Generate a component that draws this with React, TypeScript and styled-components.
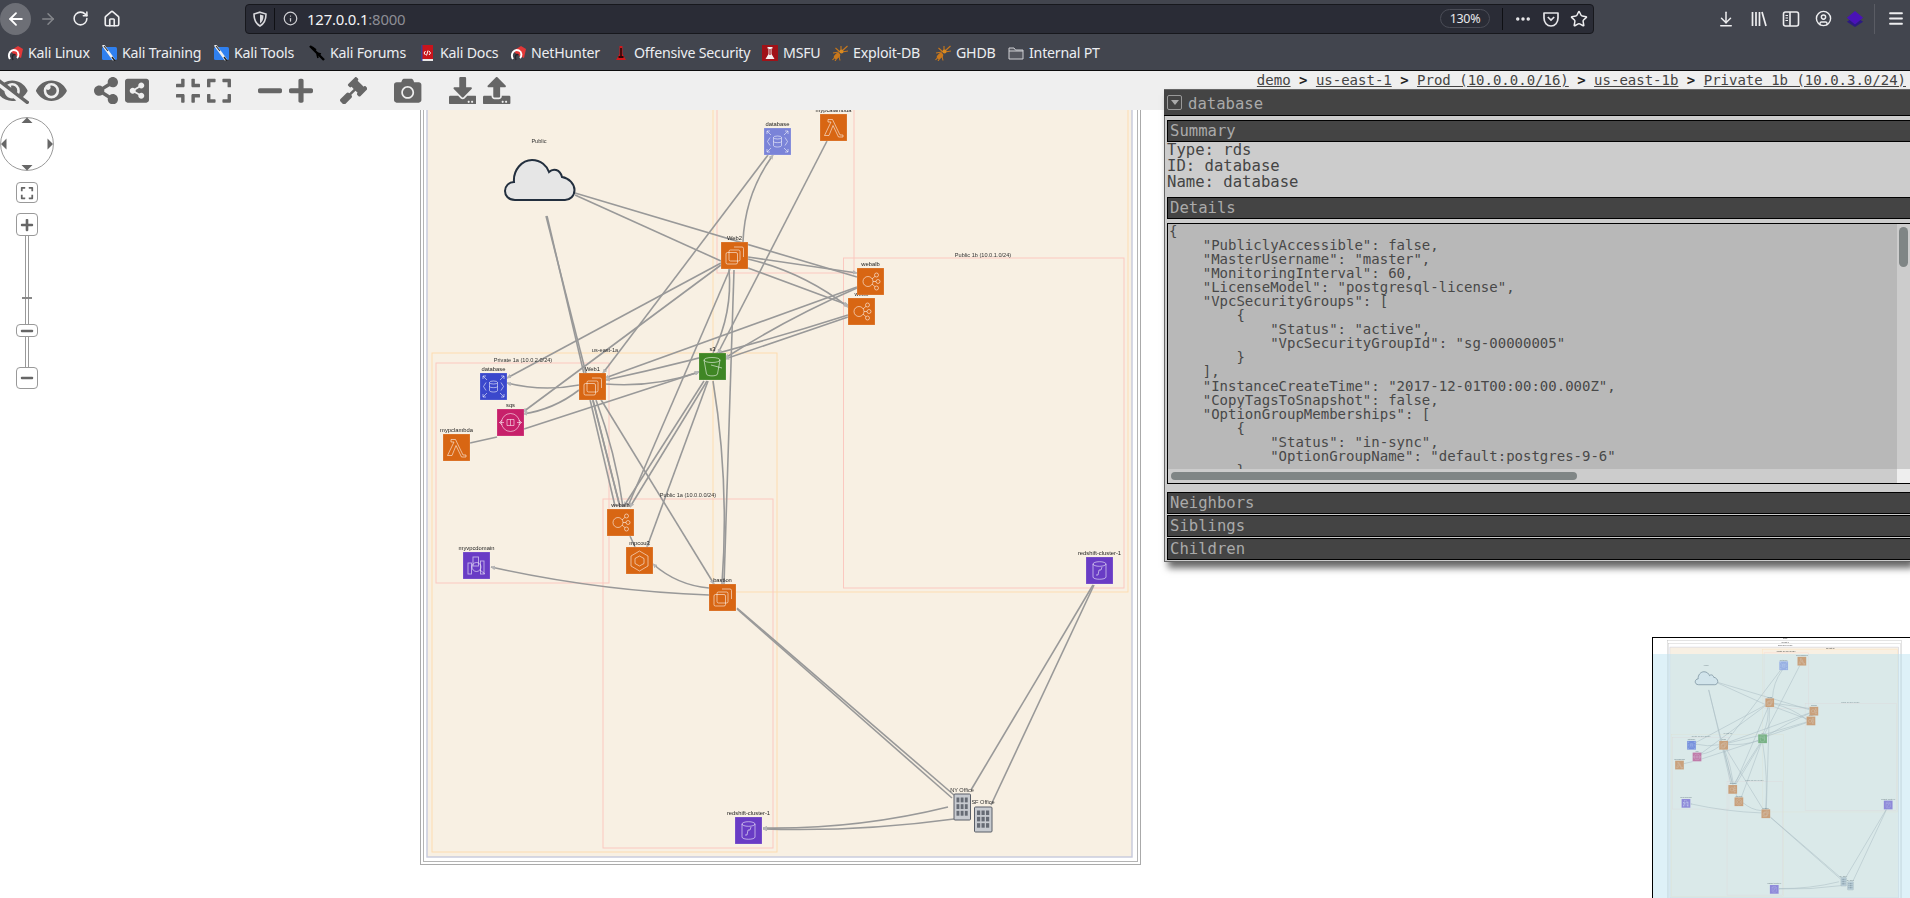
import React from "react";
import styled, { createGlobalStyle } from "styled-components";
import { ArrowLeft, ArrowRight, RotateCw, House, Info, Star, ArrowDownToLine, CircleUser, Menu, Ellipsis } from "lucide-react";
import {
  FaEyeSlash, FaEye, FaShareAlt, FaShareAltSquare, FaCompress, FaExpand,
  FaMinus, FaPlus, FaGavel, FaCamera, FaDownload, FaUpload,
} from "react-icons/fa";

const Global = createGlobalStyle`
  html, body { margin: 0; padding: 0; background: #fff; overflow: hidden; }
  * { box-sizing: border-box; }
`;

const Page = styled.div`
  position: relative;
  width: 1910px;
  height: 898px;
  overflow: hidden;
  display: flex;
  flex-direction: column;
  background: #fff;
`;

/* ---------- browser chrome ---------- */
const NavRow = styled.div`
  height: 37px;
  background: #42454e;
  display: flex;
  align-items: center;
  color: #f0f0f2;
`;
const BackCircle = styled.div`
  width: 31px;
  height: 32px;
  border-radius: 50%;
  background: #6d6f76;
  display: flex;
  align-items: center;
  justify-content: center;
  color: #fff;
`;
const NavIcon = styled.div<{ $ml: number; $dim?: boolean }>`
  width: 18px;
  height: 18px;
  margin-left: ${(p) => p.$ml}px;
  display: flex;
  align-items: center;
  justify-content: center;
  flex: none;
  color: ${(p) => (p.$dim ? "#85878c" : "#eeeef0")};
`;
const UrlBar = styled.div`
  width: 1349px;
  height: 30px;
  margin-left: 124px;
  background: #2a2c36;
  border: 1px solid #17181d;
  border-radius: 4px;
  display: flex;
  align-items: center;
  padding: 0 5px 0 6px;
  flex: none;
`;
const UrlSep = styled.div<{ $ml: number }>`
  width: 1px;
  height: 22px;
  background: #0f1014;
  margin-left: ${(p) => p.$ml}px;
  flex: none;
`;
const UrlText = styled.div`
  margin-left: 8px;
  font: 14.9px "Noto Sans", sans-serif;
  color: #f4f4f6;
  flex: 1;
  letter-spacing: -0.2px;
`;
const UrlPort = styled.span`
  color: #8d8e95;
`;
const ZoomPill = styled.div`
  width: 50px;
  height: 19px;
  border: 1px solid #4a4c56;
  border-radius: 10px;
  font: 12.5px/17px "Noto Sans", sans-serif;
  color: #e8e8ea;
  text-align: center;
  letter-spacing: -0.3px;
`;
const ChromeRule = styled.div`
  width: 1px;
  height: 30px;
  margin-left: 10px;
  background: #5a5c64;
  flex: none;
`;
const BookmarkRow = styled.div`
  height: 34px;
  background: #42454e;
  border-bottom: 1px solid #0c0c0d;
  display: flex;
  align-items: center;
  padding-left: 7px;
  padding-bottom: 2px;
`;
const Bookmark = styled.div<{ $w: number }>`
  width: ${(p) => p.$w}px;
  flex: none;
  display: flex;
  align-items: center;
  gap: 5px;
  font: 14.2px "Noto Sans", sans-serif;
  letter-spacing: -0.22px;
  color: #eceef2;
  white-space: nowrap;
`;

const BmSvg: React.FC<{ children: React.ReactNode }> = ({ children }) => (
  <svg width="16" height="16" viewBox="0 0 16 16" style={{ flex: "none" }}>{children}</svg>
);
const KaliIcon = () => (
  <BmSvg>
    <path d="M3 6 L11 1 L16 4 L14 13 L8 10 Z" fill="#e23838" />
    <path d="M3 14 C0 9 4 3.5 9 5.5 C12 7 12 11 10 13" fill="none" stroke="#fff" strokeWidth="1.9" />
    <path d="M6 15 C4 11 6.5 8.5 8.5 10" fill="none" stroke="#26262c" strokeWidth="1.5" />
  </BmSvg>
);
const ToolIcon = () => (
  <BmSvg>
    <rect x="1" y="2" width="15" height="13" rx="1.5" fill="#2f80f0" />
    <path d="M2 0 L13 15" stroke="#f0f0f0" strokeWidth="2.6" />
    <path d="M3 1 L7 6" stroke="#333" strokeWidth="1.2" />
    <path d="M11 12 L14 16" stroke="#222" strokeWidth="1.4" />
  </BmSvg>
);
const ForumIcon = () => (
  <BmSvg>
    <path d="M1 1 L15 15" stroke="#000" strokeWidth="2.4" />
    <path d="M3 2 L7 5 M8 8 L12 9 M8 9 L9 13" stroke="#000" strokeWidth="1.6" />
  </BmSvg>
);
const DocsIcon = () => (
  <BmSvg>
    <rect x="2" y="0" width="12" height="15" fill="#c8141c" />
    <rect x="2" y="14" width="12" height="2" fill="#e8e8e8" />
    <rect x="2" y="0" width="1.5" height="16" fill="#3a3f8f" />
    <path d="M6.5 6 L5 8 L6.5 10 M10 6 L11.5 8 L10 10 M9 5.5 L7.5 10.5" fill="none" stroke="#fff" strokeWidth="1" />
  </BmSvg>
);
const FlaskIcon = () => (
  <BmSvg>
    <path d="M6.5 1 H9.5 V9 L13 15 H3 L6.5 9 Z" fill="#d0181c" />
    <path d="M8 3 V12" stroke="#2a0808" strokeWidth="1.6" />
    <rect x="5.5" y="11" width="5" height="2" fill="#2a0808" />
  </BmSvg>
);
const MsfuIcon = () => (
  <BmSvg>
    <rect width="16" height="16" fill="#a01218" />
    <path d="M5.5 2 H10.5 V3.5 H9.5 V9 L12.5 14 H3.5 L6.5 9 V3.5 H5.5 Z" fill="#f4f0f0" />
    <rect x="7.4" y="4" width="1.2" height="6" fill="#a01218" />
  </BmSvg>
);
const AntIcon = () => (
  <BmSvg>
    <path d="M0.5 15 L6 9 M3 16 L7 10 M1 8 L7 7 M3.5 3 L8 7 M9 1 L9 6 M15.5 1 L10 6 M16 6 L10 7 M7 11 L8 15.5" stroke="#c9781c" strokeWidth="1.1" fill="none" />
    <ellipse cx="5" cy="11" rx="3.6" ry="2.4" transform="rotate(-40 5 11)" fill="#c9781c" />
    <circle cx="9.5" cy="6.5" r="2" fill="#d98a20" />
  </BmSvg>
);
const FolderIcon = () => (
  <BmSvg>
    <path d="M1 3 H6 L7.5 5 H15 V14 H1 Z" fill="#55575f" stroke="#cfd0d4" strokeWidth="1" />
    <path d="M1 6 H15" stroke="#cfd0d4" strokeWidth="1" />
  </BmSvg>
);

const bookmarks: [string, React.ReactNode, number][] = [
  ["Kali Linux", <KaliIcon />, 94],
  ["Kali Training", <ToolIcon />, 112],
  ["Kali Tools", <ToolIcon />, 96],
  ["Kali Forums", <ForumIcon />, 110],
  ["Kali Docs", <DocsIcon />, 91],
  ["NetHunter", <KaliIcon />, 103],
  ["Offensive Security", <FlaskIcon />, 149],
  ["MSFU", <MsfuIcon />, 70],
  ["Exploit-DB", <AntIcon />, 103],
  ["GHDB", <AntIcon />, 73],
  ["Internal PT", <FolderIcon />, 100],
];

/* ---------- page toolbar ---------- */
const ToolBar = styled.div`
  height: 39px;
  background: #efefef;
  display: flex;
  align-items: center;
  position: relative;
  z-index: 2;
  color: #666;
  flex: none;
`;
const ToolIcons = styled.div`
  display: flex;
  align-items: center;
  gap: 27px;
  margin-left: -5px;
  height: 39px;
`;
const ToolGroup = styled.div`
  display: flex;
  align-items: center;
  gap: 7px;
`;
const ToolGlyph = styled.span<{ $w: number }>`
  display: flex;
  flex: none;
  width: ${(p) => p.$w}px;
  height: 27.4px;
  svg {
    width: ${(p) => p.$w}px;
    height: 27.4px;
  }
`;
const Crumbs = styled.div`
  margin-left: auto;
  align-self: flex-start;
  padding-right: 4px;
  font: 14px/18px "DejaVu Sans Mono", monospace;
  color: #333;
  white-space: pre;
`;
const CrumbLink = styled.span`
  text-decoration: underline;
  color: #444;
`;
const CrumbSep = styled.b`
  color: #222;
`;

/* ---------- canvas ---------- */
const Canvas = styled.div`
  position: relative;
  flex: 1;
  background: #fff;
`;
const GraphSvg = styled.svg`
  display: block;
  width: 1910px;
  height: 788px;
  filter: blur(0.4px);
`;

/* pan/zoom overlay */
const PanZoom = styled.div`
  position: absolute;
  left: 0;
  top: 7px;
  width: 54px;
  display: flex;
  flex-direction: column;
  align-items: center;
`;
const ZoomBtn = styled.div<{ $h: number; $mt?: number }>`
  width: 22px;
  height: ${(p) => p.$h}px;
  margin-top: ${(p) => p.$mt ?? 0}px;
  background: #fff;
  border: 1px solid #999;
  border-radius: 4px;
  color: #666;
  display: flex;
  align-items: center;
  justify-content: center;
  flex: none;
`;
const Rail = styled.div<{ $h: number }>`
  position: relative;
  width: 4px;
  height: ${(p) => p.$h}px;
  border-left: 1px solid #999;
  border-right: 1px solid #999;
  flex: none;
`;
const RailTick = styled.div`
  position: absolute;
  left: -4px;
  top: 61px;
  width: 10px;
  height: 2px;
  background: #888;
`;

/* inspector */
const Inspector = styled.div`
  position: absolute;
  z-index: 3;
  left: 1164px;
  top: 89px;
  width: 746px;
  height: 473px;
  background: #ccc;
  border: 1px solid #666;
  border-right: none;
  padding: 0 0 0 2px;
  box-shadow: 4px 6px 7px rgba(0, 0, 0, 0.6);
  font-family: "DejaVu Sans Mono", monospace;
  display: flex;
  flex-direction: column;
`;
const WindowHead = styled.div`
  height: 26px;
  margin-left: -3px;
  flex: none;
  background: #444;
  border-bottom: 1px solid #000;
  display: flex;
  align-items: center;
  padding-left: 3px;
  gap: 6px;
  color: #aaa;
  font-size: 15.6px;
`;
const WindowTitle = styled.span`
  position: relative;
  top: 1px;
`;
const Collapse = styled.div`
  width: 15px;
  height: 15px;
  border: 1.5px solid #999;
  border-radius: 2px;
  position: relative;
  display: flex;
  align-items: center;
  justify-content: center;
  &::after {
    content: "";
    border-left: 4px solid transparent;
    border-right: 4px solid transparent;
    border-top: 5px solid #aaa;
  }
`;
const SectionHead = styled.div<{ $mt?: number }>`
  height: 22px;
  margin-top: ${(p) => p.$mt ?? 0}px;
  flex: none;
  background: #444;
  border: 1px solid #000;
  border-right: none;
  color: #aaa;
  font-size: 15.6px;
  line-height: 21px;
  padding-left: 2px;
`;
const SummaryBody = styled.div`
  height: 55px;
  flex: none;
  color: #444;
  font-size: 15.6px;
  line-height: 15.8px;
  white-space: pre;
  padding-top: 1px;
  margin-left: -2px;
  padding-left: 2px;
`;
const CodeBox = styled.div`
  position: relative;
  margin-top: 4px;
  height: 261px;
  flex: none;
  background: #b8b8b8;
  border: 1px solid #000;
  border-right: none;
  overflow: hidden;
`;
const Code = styled.pre`
  margin: 0;
  padding: 0 0 0 1px;
  font: 14px/14.05px "DejaVu Sans Mono", monospace;
  color: #484848;
`;
const VRail = styled.div`
  position: absolute;
  right: 0;
  top: 0;
  bottom: 14px;
  width: 13px;
  background: #ccc;
`;
const VThumb = styled.div`
  position: absolute;
  left: 2px;
  top: 3px;
  width: 9px;
  height: 40px;
  border-radius: 5px;
  background: #7f8585;
`;
const HRail = styled.div`
  position: absolute;
  left: 0;
  right: 13px;
  bottom: 0;
  height: 14px;
  background: #ccc;
`;
const HThumb = styled.div`
  position: absolute;
  left: 3px;
  top: 3px;
  width: 406px;
  height: 8px;
  border-radius: 4px;
  background: #7f8585;
`;
const Corner = styled.div`
  position: absolute;
  right: 0;
  bottom: 0;
  width: 13px;
  height: 14px;
  background: #eee;
`;

/* minimap */
const MiniMap = styled.div`
  position: absolute;
  z-index: 2;
  left: 1652px;
  top: 637px;
  width: 258px;
  height: 261px;
  background: #fff;
  border-left: 1.5px solid #000;
  border-top: 1.5px solid #000;
  overflow: hidden;
`;
const MiniSvg = styled.svg`
  display: block;
  width: 258px;
  height: 261px;
  filter: blur(0.5px);
`;
const MiniView = styled.div`
  position: absolute;
  left: 0;
  right: 0;
  top: 15.5px;
  bottom: 0;
  background: rgba(184, 225, 240, 0.47);
`;

/* ---------- diagram data ---------- */
type Kind = "ec2" | "elb" | "lambda" | "rds" | "s3" | "sqs" | "ecs" | "redshift" | "es";
const nodes: { k: Kind; x: number; y: number; c: string; label: string }[] = [
  { k: "rds", x: 764, y: 128, c: "#7a83d8", label: "database" },
  { k: "lambda", x: 820, y: 114, c: "#d86613", label: "mypcalambda" },
  { k: "ec2", x: 721, y: 242, c: "#d86613", label: "Web2" },
  { k: "elb", x: 848, y: 298, c: "#d86613", label: "webb" },
  { k: "elb", x: 857, y: 268, c: "#d86613", label: "webalb" },
  { k: "s3", x: 699, y: 353, c: "#3f8624", label: "s3" },
  { k: "ec2", x: 579, y: 373, c: "#d86613", label: "Web1" },
  { k: "rds", x: 480, y: 373, c: "#3b48cc", label: "database" },
  { k: "sqs", x: 497, y: 409, c: "#c7206a", label: "sqs" },
  { k: "lambda", x: 443, y: 434, c: "#d86613", label: "mypclambda" },
  { k: "elb", x: 607, y: 509, c: "#d86613", label: "webalb" },
  { k: "ecs", x: 626, y: 547, c: "#d86613", label: "mpcou3" },
  { k: "ec2", x: 709, y: 584, c: "#d86613", label: "bastion" },
  { k: "es", x: 463, y: 552, c: "#693cc5", label: "myvpcdomain" },
  { k: "redshift", x: 735, y: 817, c: "#693cc5", label: "redshift-cluster-1" },
  { k: "redshift", x: 1086, y: 557, c: "#693cc5", label: "redshift-cluster-1" },
];

/* x1 y1 x2 y2 bend arrow */
const edges: [number, number, number, number, number, boolean][] = [
  [575, 193, 857, 277, 0, false],
  [575, 195, 721, 261, 0, false],
  [547, 216, 615, 506, 0, false],
  [546, 216, 620, 507, 0, false],
  [593, 400, 620, 507, 0, false],
  [596, 400, 623, 507, -3, false],
  [600, 398, 714, 584, 0, true],
  [579, 385, 507, 383, -4, true],
  [579, 390, 523, 414, -4, true],
  [605, 384, 699, 372, 5, true],
  [848, 315, 606, 380, -3, true],
  [857, 287, 605, 378, 0, true],
  [848, 317, 725, 359, 0, true],
  [857, 288, 725, 358, 3, true],
  [721, 263, 507, 378, 0, true],
  [721, 265, 523, 412, 0, true],
  [768, 155, 603, 373, 0, true],
  [743, 242, 773, 155, -7, true],
  [827, 141, 718, 353, 0, true],
  [748, 257, 857, 273, 0, true],
  [748, 259, 848, 307, -6, true],
  [748, 268, 848, 305, 0, true],
  [729, 269, 713, 353, -6, false],
  [730, 269, 628, 506, 0, false],
  [734, 270, 724, 584, 0, true],
  [713, 381, 722, 584, -6, true],
  [707, 381, 630, 507, 0, true],
  [704, 381, 624, 506, 0, true],
  [708, 381, 647, 547, 0, true],
  [630, 536, 635, 547, 0, false],
  [524, 429, 699, 372, 0, true],
  [470, 443, 497, 437, 0, false],
  [709, 595, 491, 567, -5, true],
  [709, 588, 653, 564, -5, true],
  [737, 608, 954, 795, 0, false],
  [737, 609, 952, 798, 0, false],
  [1093, 585, 971, 790, 0, false],
  [1094, 585, 991, 805, 0, false],
  [948, 807, 763, 828, -6, true],
  [954, 819, 763, 829, -4, true],
];

const regions: { x: number; y: number; w: number; h: number; c: string }[] = [
  { x: 713, y: 92, w: 415, h: 500, c: "#fdddb2" },
  { x: 432, y: 353, w: 345, h: 499, c: "#fddcb0" },
  { x: 717, y: 102, w: 137, h: 171, c: "#fbc8c0" },
  { x: 436, y: 363, w: 173, h: 220, c: "#fbc8c0" },
  { x: 603, y: 499, w: 170, h: 349, c: "#fbc8c0" },
  { x: 843.5, y: 258, w: 280.5, h: 330, c: "#fbc8c0" },
];

const texts: [string, number, number][] = [
  ["demo", 782, 60],
  ["us-east-1", 782, 72],
  ["Prod (10.0.0.0/16)", 782, 80],
  ["us-east-1b", 921, 91],
  ["Private 1b (10.0.3.0/24)", 785, 99],
  ["Public", 539, 142.5],
  ["us-east-1a", 605, 352],
  ["Private 1a (10.0.2.0/24)", 523, 362],
  ["Public 1a (10.0.0.0/24)", 688, 497],
  ["Public 1b (10.0.1.0/24)", 983, 257],
  ["NY Office", 962, 792],
  ["SF Office", 983, 804],
];

const Glyph: React.FC<{ k: Kind }> = ({ k }) => {
  switch (k) {
    case "ec2":
      return (
        <g>
          <rect x="5" y="10.5" width="11.5" height="11.5" rx="1.5" />
          <rect x="8" y="8" width="11" height="11" rx="1.5" />
          <path d="M13 5 H21 A1.5 1.5 0 0 1 22.5 6.5 V15" />
        </g>
      );
    case "elb":
      return (
        <g>
          <circle cx="11" cy="13.5" r="5" />
          <circle cx="19.5" cy="7" r="2" />
          <circle cx="21" cy="13.5" r="2" />
          <circle cx="19.5" cy="20" r="2" />
          <path d="M15 11 L18 8.3 M16 13.5 H19 M15 16 L18 18.7" />
        </g>
      );
    case "lambda":
      return <path d="M8 5.5 H12.5 L20 21 H23 V23 H18.5 L13 11.5 L9 21.5 H4.5 L11 8 H8 Z" />;
    case "rds":
      return (
        <g>
          <ellipse cx="13.5" cy="9.5" rx="4" ry="1.5" />
          <path d="M9.5 9.5 V17.5 C9.5 19.5 17.5 19.5 17.5 17.5 V9.5 M9.5 13.5 C9.5 15 17.5 15 17.5 13.5" />
          <path d="M6 9.5 L3.5 13.5 L6 17.5 M21 9.5 L23.5 13.5 L21 17.5" />
          <path d="M3 3 L7 7 M3 6 V3 H6 M24 3 L20 7 M24 6 V3 H21 M3 24 L7 20 M3 21 V24 H6 M24 24 L20 20 M24 21 V24 H21" />
        </g>
      );
    case "s3":
      return (
        <g>
          <ellipse cx="13" cy="7" rx="8" ry="2.5" />
          <path d="M5 7 L7.5 21 C8 23.5 18 23.5 18.5 21 L21 7" />
          <path d="M12 12 L23 15" />
        </g>
      );
    case "sqs":
      return (
        <g>
          <circle cx="13.5" cy="13.5" r="9" />
          <path d="M10 10.5 H17 V16.5 H10 Z M13.5 10.5 V16.5" />
          <path d="M2.5 13.5 H7 M20 13.5 H24.5 M5 11 L2.5 13.5 L5 16 M22 11 L24.5 13.5 L22 16" />
        </g>
      );
    case "ecs":
      return (
        <g>
          <path d="M13.5 4 L22 9 V19 L13.5 24 L5 19 V9 Z" />
          <path d="M13.5 9 L18 11.5 V16.5 L13.5 19 L9 16.5 V11.5 Z" />
        </g>
      );
    case "redshift":
      return (
        <g>
          <ellipse cx="13.5" cy="7" rx="6.5" ry="2.3" />
          <path d="M7 7 V20 C7 23 20 23 20 20 V7" />
          <path d="M10 18 L12 18 L13 13 L15 13 L16 10" />
        </g>
      );
    case "es":
      return (
        <g>
          <rect x="5" y="11" width="3.5" height="11" />
          <rect x="17.5" y="9" width="3.5" height="13" />
          <rect x="10" y="5" width="5.5" height="9" />
          <circle cx="13.5" cy="15" r="4.5" />
          <path d="M17 18 L22 22" />
        </g>
      );
  }
};

const Office: React.FC<{ x: number; y: number; w: number; h: number }> = ({ x, y, w, h }) => {
  const cells: React.ReactNode[] = [];
  const cw = (w - 4) / 3;
  const ch = (h - 6) / 3;
  for (let r = 0; r < 3; r++)
    for (let c = 0; c < 3; c++)
      cells.push(
        <rect key={`${r}${c}`} x={x + 2.5 + c * cw} y={y + 3.5 + r * ch} width={cw - 1.3} height={ch - 1.8} fill="#666b74" />
      );
  return (
    <g>
      <rect x={x} y={y} width={w} height={h} rx="1" fill="#c8cbd0" stroke="#5a5f68" strokeWidth="1" />
      {cells}
    </g>
  );
};

const arrowPath = (x1: number, y1: number, x2: number, y2: number, bend: number) => {
  if (!bend) return `M${x1} ${y1} L${x2} ${y2}`;
  const mx = (x1 + x2) / 2;
  const my = (y1 + y2) / 2;
  const dx = x2 - x1;
  const dy = y2 - y1;
  const len = Math.hypot(dx, dy);
  const cx = mx + (-dy / len) * bend * 2;
  const cy = my + (dx / len) * bend * 2;
  return `M${x1} ${y1} Q${cx} ${cy} ${x2} ${y2}`;
};

const Graph: React.FC<{ id: string }> = ({ id }) => (
  <g>
    <defs>
      <marker id={`${id}-a`} viewBox="0 0 10 10" refX="9" refY="5" markerWidth="4.6" markerHeight="4.6" markerUnits="userSpaceOnUse" orient="auto">
        <path d="M0 0 L10 5 L0 10 Z" fill="#b5b5b5" />
      </marker>
    </defs>
    <rect x="420.5" y="64" width="720" height="800.5" fill="#fff" stroke="#aaa" strokeWidth="1" />
    <rect x="423.5" y="74" width="714" height="787.5" fill="#fff" stroke="#b4b4b4" strokeWidth="1" />
    <rect x="427" y="84" width="705" height="773" fill="#f8f0e3" stroke="#c6c9dc" strokeWidth="1.4" />
    {regions.map((r, i) => (
      <rect key={i} x={r.x} y={r.y} width={r.w} height={r.h} fill="none" stroke={r.c} strokeWidth="1" />
    ))}
    {edges.map(([a, b, c, d, bend, arrow], i) => (
      <path
        key={i}
        d={arrowPath(a, b, c, d, bend)}
        fill="none"
        stroke="#999"
        strokeWidth="1.6"
        markerEnd={arrow ? `url(#${id}-a)` : undefined}
      />
    ))}
    <path
      d="M515 200 C508 200 505 195 505 191 C505 186 509 182 514 182 C513 170 522 160 532 160 C541 160 547 166 549 172 C553 168 560 169 562 177 C569 178 574.5 184 574.5 190 C574.5 196 570 200 565 200 Z"
      fill="#e6e6e6"
      stroke="#232f3e"
      strokeWidth="2"
    />
    {nodes.map((n, i) => (
      <g key={i}>
        <rect x={n.x} y={n.y} width="27" height="27" fill={n.c} stroke="#fff" strokeOpacity="0.3" strokeWidth="0.6" />
        <g transform={`translate(${n.x} ${n.y})`} fill="none" stroke="#fff" strokeOpacity="0.62" strokeWidth="0.9">
          <Glyph k={n.k} />
        </g>
        <text x={n.x + 13.5} y={n.y - 2.5} textAnchor="middle" fontFamily="'Liberation Sans', sans-serif" fontSize="5.8" fill="#222">
          {n.label}
        </text>
      </g>
    ))}
    <Office x={954} y={794} w={16.5} h={26} />
    <Office x={974.5} y={807} w={17.5} h={25} />
    {texts.map(([t, x, y], i) => (
      <text key={i} x={x} y={y} textAnchor="middle" fontFamily="'Liberation Sans', sans-serif" fontSize="5.6" fill="#333">
        {t}
      </text>
    ))}
  </g>
);

const code = `{
    "PubliclyAccessible": false,
    "MasterUsername": "master",
    "MonitoringInterval": 60,
    "LicenseModel": "postgresql-license",
    "VpcSecurityGroups": [
        {
            "Status": "active",
            "VpcSecurityGroupId": "sg-00000005"
        }
    ],
    "InstanceCreateTime": "2017-12-01T00:00:00.000Z",
    "CopyTagsToSnapshot": false,
    "OptionGroupMemberships": [
        {
            "Status": "in-sync",
            "OptionGroupName": "default:postgres-9-6"
        }
    ],
    "Engine": "postgres"
}`;

const ShieldIcon = () => (
  <svg width="16" height="16" viewBox="0 0 16 16" style={{ flex: "none" }}>
    <path d="M8 1.2 L14 3 C14 9 12.5 12.5 8 15 C3.5 12.5 2 9 2 3 Z" fill="none" stroke="#d8d8dc" strokeWidth="1.6" />
    <path d="M8 3.5 L11.5 4.6 C11.5 8.5 10.5 10.8 8 12.5 Z" fill="#d8d8dc" />
  </svg>
);
const PocketIcon = () => (
  <svg width="18" height="18" viewBox="0 0 18 18">
    <path d="M2 3 H16 V8 C16 12.5 13 16 9 16 C5 16 2 12.5 2 8 Z" fill="none" stroke="#e4e4e8" strokeWidth="1.7" strokeLinejoin="round" />
    <path d="M5.8 7 L9 10 L12.2 7" fill="none" stroke="#e4e4e8" strokeWidth="1.7" />
  </svg>
);
const LibraryIcon = () => (
  <svg width="18" height="18" viewBox="0 0 18 18">
    <path d="M2.5 2 V16 M6 2 V16 M9.5 2 V16 M12 2 L16 16" fill="none" stroke="#eeeef0" strokeWidth="1.7" />
  </svg>
);
const SidebarIcon = () => (
  <svg width="18" height="18" viewBox="0 0 18 18">
    <rect x="1.5" y="2" width="15" height="14" rx="2" fill="none" stroke="#eeeef0" strokeWidth="1.6" />
    <path d="M8 2 V16" stroke="#eeeef0" strokeWidth="1.6" />
    <path d="M3.5 5.5 H6 M3.5 8 H6 M3.5 10.5 H6" stroke="#eeeef0" strokeWidth="1.2" />
  </svg>
);
const StackIcon = () => (
  <svg width="20" height="20" viewBox="0 0 20 20">
    <path d="M10 7 L19 13 L10 19 L1 13 Z" fill="#2c1a80" />
    <path d="M10 1 L19 8.5 L10 16 L1 8.5 Z" fill="#4a12b8" />
  </svg>
);

const PanControl = () => (
  <svg width="54" height="55" viewBox="0 0 54 55" style={{ flex: "none" }}>
    <circle cx="27" cy="27" r="26.4" fill="#fff" stroke="#999" strokeWidth="1" />
    <path d="M21.5 6 L27 0.5 L32.5 6 Z M21.5 48 L27 53.5 L32.5 48 Z M6.5 21.5 L1 27 L6.5 32.5 Z M47.5 21.5 L53 27 L47.5 32.5 Z" fill="#666" />
  </svg>
);

const App: React.FC = () => (
  <Page>
    <Global />
    <NavRow>
      <BackCircle>
        <ArrowLeft size={20} strokeWidth={2.2} />
      </BackCircle>
      <NavIcon $ml={8} $dim><ArrowRight size={18} /></NavIcon>
      <NavIcon $ml={14}><RotateCw size={17} strokeWidth={2.2} /></NavIcon>
      <NavIcon $ml={14}><House size={18} strokeWidth={2.2} /></NavIcon>
      <UrlBar>
        <ShieldIcon />
        <UrlSep $ml={6} />
        <NavIcon $ml={6} style={{ color: "#cfcfd3" }}><Info size={15} /></NavIcon>
        <UrlText>
          127.0.0.1<UrlPort>:8000</UrlPort>
        </UrlText>
        <ZoomPill>130%</ZoomPill>
        <UrlSep $ml={12} />
        <NavIcon $ml={11}><Ellipsis size={18} strokeWidth={2.6} /></NavIcon>
        <NavIcon $ml={10}><PocketIcon /></NavIcon>
        <NavIcon $ml={10}><Star size={18} strokeWidth={2} /></NavIcon>
      </UrlBar>
      <NavIcon $ml={123}><ArrowDownToLine size={18} /></NavIcon>
      <NavIcon $ml={15}><LibraryIcon /></NavIcon>
      <NavIcon $ml={14}><SidebarIcon /></NavIcon>
      <NavIcon $ml={14}><CircleUser size={17} /></NavIcon>
      <NavIcon $ml={14}><StackIcon /></NavIcon>
      <ChromeRule />
      <NavIcon $ml={12}><Menu size={19} strokeWidth={2.4} /></NavIcon>
    </NavRow>
    <BookmarkRow>
      {bookmarks.map(([label, icon, w]) => (
        <Bookmark key={label} $w={w}>
          {icon}
          {label}
        </Bookmark>
      ))}
    </BookmarkRow>
    <ToolBar>
      <ToolIcons>
        <ToolGroup>
          <ToolGlyph $w={34.25}><FaEyeSlash /></ToolGlyph>
          <ToolGlyph $w={30.8}><FaEye /></ToolGlyph>
        </ToolGroup>
        <ToolGroup>
          <ToolGlyph $w={24}><FaShareAlt /></ToolGlyph>
          <ToolGlyph $w={24}><FaShareAltSquare /></ToolGlyph>
        </ToolGroup>
        <ToolGroup>
          <ToolGlyph $w={24}><FaCompress /></ToolGlyph>
          <ToolGlyph $w={24}><FaExpand /></ToolGlyph>
        </ToolGroup>
        <ToolGroup>
          <ToolGlyph $w={24}><FaMinus /></ToolGlyph>
          <ToolGlyph $w={24}><FaPlus /></ToolGlyph>
        </ToolGroup>
        <ToolGlyph $w={27.4}><FaGavel /></ToolGlyph>
        <ToolGlyph $w={27.4}><FaCamera /></ToolGlyph>
        <ToolGroup>
          <ToolGlyph $w={27.4}><FaDownload /></ToolGlyph>
          <ToolGlyph $w={27.4}><FaUpload /></ToolGlyph>
        </ToolGroup>
      </ToolIcons>
      <Crumbs>
        <CrumbLink>demo</CrumbLink> <CrumbSep>&gt;</CrumbSep> <CrumbLink>us-east-1</CrumbLink>{" "}
        <CrumbSep>&gt;</CrumbSep> <CrumbLink>Prod (10.0.0.0/16)</CrumbLink> <CrumbSep>&gt;</CrumbSep>{" "}
        <CrumbLink>us-east-1b</CrumbLink> <CrumbSep>&gt;</CrumbSep> <CrumbLink>Private 1b (10.0.3.0/24)</CrumbLink>
      </Crumbs>
    </ToolBar>
    <Canvas>
      <GraphSvg viewBox="0 110 1910 788">
        <Graph id="main" />
      </GraphSvg>
      <PanZoom>
        <PanControl />
        <ZoomBtn $h={21} $mt={10}><FaExpand size={14} /></ZoomBtn>
        <ZoomBtn $h={23} $mt={10}><FaPlus size={14} /></ZoomBtn>
        <Rail $h={88}><RailTick /></Rail>
        <ZoomBtn $h={13}><FaMinus size={14} /></ZoomBtn>
        <Rail $h={30} />
        <ZoomBtn $h={22}><FaMinus size={14} /></ZoomBtn>
      </PanZoom>
    </Canvas>
    <Inspector>
      <WindowHead>
        <Collapse />
        <WindowTitle>database</WindowTitle>
      </WindowHead>
      <SectionHead $mt={4}>Summary</SectionHead>
      <SummaryBody>{"Type: rds\nID: database\nName: database"}</SummaryBody>
      <SectionHead>Details</SectionHead>
      <CodeBox>
        <Code>{code}</Code>
        <VRail><VThumb /></VRail>
        <HRail><HThumb /></HRail>
        <Corner />
      </CodeBox>
      <SectionHead $mt={8}>Neighbors</SectionHead>
      <SectionHead $mt={1}>Siblings</SectionHead>
      <SectionHead $mt={1}>Children</SectionHead>
    </Inspector>
    <MiniMap>
      <MiniSvg viewBox="0 0 258 261">
        <g transform="translate(-121.7 -18.2) scale(0.3246)">
          <Graph id="mini" />
        </g>
      </MiniSvg>
      <MiniView />
    </MiniMap>
  </Page>
);

export default App;
